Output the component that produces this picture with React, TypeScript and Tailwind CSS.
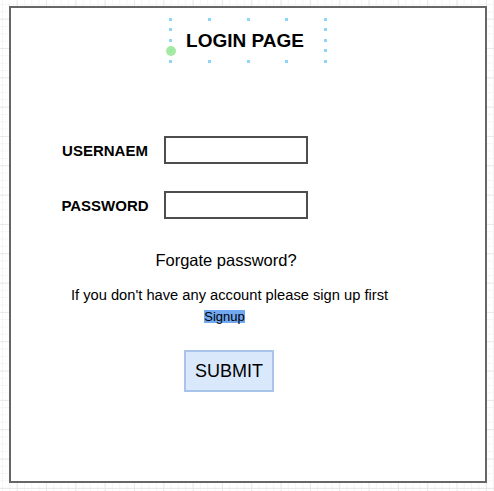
import React from "react";

const hx = [0, 38.75, 77.5, 116.25, 155];
const hy = [0, 10.5, 21, 31.5, 42];

function Handle({ x, y }: { x: number; y: number }) {
  return (
    <div
      className="absolute w-[3px] h-[3px] -ml-[1.5px] -mt-[1.5px] bg-[#8fd5f5]"
      style={{ left: x, top: y }}
    />
  );
}

export default function App() {
  const handles: { x: number; y: number }[] = [];
  hx.forEach((x) => {
    handles.push({ x, y: 0 });
    handles.push({ x, y: 42 });
  });
  hy.slice(1, 4).forEach((y) => {
    handles.push({ x: 0, y });
    handles.push({ x: 155, y });
  });

  return (
    <div
      className="relative w-[494px] h-[491px] overflow-hidden bg-white pl-[9px] pt-[6px] text-black [background-image:linear-gradient(#e9e9e9_1px,transparent_1px),linear-gradient(90deg,#e9e9e9_1px,transparent_1px),linear-gradient(#f5f5f5_1px,transparent_1px),linear-gradient(90deg,#f5f5f5_1px,transparent_1px)] [background-size:29.333px_29.333px,29.333px_29.333px,7.333px_7.333px,7.333px_7.333px] [background-position:16.7px_18.7px,16.7px_18.7px,16.7px_18.7px,16.7px_18.7px]"
      style={{ fontFamily: '"Liberation Sans", Arial, Helvetica, sans-serif' }}
    >
      <div className="w-[478px] h-[477px] border-2 border-[#666666] bg-white flex flex-col items-center">
        {/* Title */}
        <div className="relative mt-[11px] w-[155px] h-[42px] flex items-center justify-center pr-[6px]">
          <span className="text-[19px] font-bold leading-none">LOGIN PAGE</span>
          {handles.map((h, i) => (
            <Handle key={i} x={h.x} y={h.y} />
          ))}
          <div className="absolute left-[-5px] top-[26.5px] w-[10px] h-[10px] rounded-full bg-[#9be89b] opacity-90" />
        </div>

        {/* Username */}
        <div className="self-start ml-[44px] mt-[75px] flex items-center h-[28px]">
          <div className="w-[100px] text-center text-[15px] font-bold leading-none">USERNAEM</div>
          <div className="ml-[9px] w-[144px] h-[28px] border-2 border-[#4d4d4d] bg-white" />
        </div>

        {/* Password */}
        <div className="self-start ml-[44px] mt-[27px] flex items-center h-[28px]">
          <div className="w-[100px] text-center text-[15px] font-bold leading-none">PASSWORD</div>
          <div className="ml-[9px] w-[144px] h-[28px] border-2 border-[#4d4d4d] bg-white" />
        </div>

        <div className="self-stretch mt-[31px] pr-[44px] text-center text-[16.5px] leading-[20px]">
          Forgate password?
        </div>

        <div className="self-stretch mt-[16px] pr-[37px] text-center text-[14.7px] leading-[18px]">
          If you don't have any account please sign up first
        </div>

        <div className="self-stretch mt-[5px] pr-[47px] text-center leading-[13px]">
          <span className="inline-block h-[13px] text-[13px] leading-[13px] bg-[#71a8f2]">Signup</span>
        </div>

        <div className="self-start ml-[173px] mt-[27px] w-[90px] h-[42px] bg-[#dae8fc] border-2 border-[#a9c4eb] flex items-center justify-center text-[18px]">
          SUBMIT
        </div>
      </div>
    </div>
  );
}
